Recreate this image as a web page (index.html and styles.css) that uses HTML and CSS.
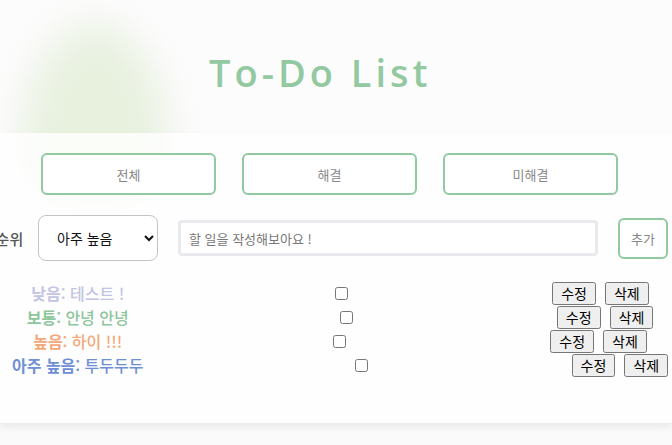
FILE: index.html
```html
<!DOCTYPE html>
<html lang="ko">
<head>
<meta charset="utf-8">
<title>To-Do List</title>
<link rel="stylesheet" href="styles.css">
</head>
<body>
<div class="blob"></div>
<header class="head">
  <h1 class="title">To-Do List</h1>
</header>
<main class="card">
  <div class="filters">
    <button class="filter">전체</button>
    <button class="filter">해결</button>
    <button class="filter">미해결</button>
  </div>
  <div class="form">
    <label class="prio-label">우선순위</label>
    <select class="prio-select">
      <option>낮음</option>
      <option>보통</option>
      <option>높음</option>
      <option selected>아주 높음</option>
    </select>
    <input class="todo-input" type="text" placeholder="할 일을 작성해보아요 !">
    <button class="add">추가</button>
  </div>
  <ul class="list">
    <li class="row low"><span class="txt"><b>낮음</b>: 테스트 !</span><input class="chk" type="checkbox"><span class="acts"><button class="act">수정</button><button class="act">삭제</button></span></li>
    <li class="row mid"><span class="txt"><b>보통</b>: 안녕 안녕</span><input class="chk" type="checkbox"><span class="acts"><button class="act">수정</button><button class="act">삭제</button></span></li>
    <li class="row high"><span class="txt"><b>높음</b>: 하이 !!!</span><input class="chk" type="checkbox"><span class="acts"><button class="act">수정</button><button class="act">삭제</button></span></li>
    <li class="row top"><span class="txt"><b>아주 높음</b>: 투두두두</span><input class="chk" type="checkbox"><span class="acts"><button class="act">수정</button><button class="act">삭제</button></span></li>
  </ul>
</main>
</body>
</html>
```
FILE: styles.css
```css
html, body {
  margin: 0;
  padding: 0;
}
body {
  background: #fafafa;
  font-family: "Noto Sans CJK KR", "Noto Sans", sans-serif;
  overflow: hidden;
  height: 445px;
  position: relative;
}
body::before {
  content: "";
  position: absolute;
  left: 0; top: 0; right: 0;
  height: 133px;
  background: #fdfcfd;
  z-index: -1;
}
.blob {
  position: absolute;
  left: 22px;
  top: 24px;
  width: 146px;
  height: 180px;
  border-radius: 50% 50% 30% 30% / 70% 70% 30% 30%;
  background: rgba(214, 232, 196, 0.55);
  filter: blur(20px);
  z-index: 0;
}
.head {
  position: relative;
  height: 133px;
  display: flex;
  align-items: center;
}
.title {
  margin: 0 0 0 209px;
  padding-top: 10px;
  font-family: "Open Sans", "Noto Sans", sans-serif;
  font-weight: 600;
  font-size: 38px;
  letter-spacing: 4px;
  color: #93c9a0;
  line-height: 1;
}
.card {
  position: relative;
  z-index: 1;
  background: rgba(255, 255, 255, 0.82);
  height: 290px;
  box-sizing: border-box;
  padding-top: 20px;
  box-shadow: 0 4px 8px rgba(0, 0, 0, 0.07);
}
.filters {
  display: flex;
  gap: 26px;
  padding-left: 41px;
}
.filter {
  width: 175px;
  height: 42px;
  background: #fff;
  border: 2px solid #93c9a0;
  border-radius: 6px;
  color: #888;
  font-family: inherit;
  font-size: 13px;
}
.form {
  display: flex;
  align-items: center;
  margin-top: 20px;
  margin-left: -32px;
}
.prio-label {
  font-size: 15px;
  color: #555;
  font-weight: 500;
  width: 60px;
}
.prio-select {
  margin-left: 10px;
  width: 120px;
  height: 46px;
  border: 1px solid #c4c4c4;
  border-radius: 8px;
  background: #fff;
  font-family: inherit;
  font-size: 14px;
  color: #111;
  padding: 0 8px 0 14px;
}
.todo-input {
  margin-left: 20px;
  width: 420px;
  height: 36px;
  box-sizing: border-box;
  border: 3px solid #e8eaed;
  border-radius: 4px;
  padding: 0 8px;
  font-family: inherit;
  font-size: 13px;
}
.todo-input::placeholder { color: #777; }
.add {
  margin-left: 20px;
  width: 50px;
  height: 41px;
  background: #fff;
  border: 2px solid #93c9a0;
  border-radius: 6px;
  color: #888;
  font-family: inherit;
  font-size: 13px;
  padding: 0;
}
.list {
  list-style: none;
  margin: 20px 0 0;
  padding: 0 0 0 8px;
}
.row {
  display: flex;
  justify-content: center;
  align-items: center;
  height: 24px;
  font-size: 16px;
}
.txt { font-weight: 500; }
.txt b { font-weight: 700; }
.chk {
  margin: 0 0 0 211px;
  width: 13px;
  height: 13px;
}
.acts {
  display: flex;
  gap: 9px;
  margin-left: 204px;
}
.act {
  font-family: inherit;
  font-size: 14px;
  line-height: 17px;
  padding: 1px 7px;
}
.low { color: #c2c5e4; }
.mid { color: #8ec69b; }
.high { color: #f4a879; }
.top { color: #6e8fd6; }
```
